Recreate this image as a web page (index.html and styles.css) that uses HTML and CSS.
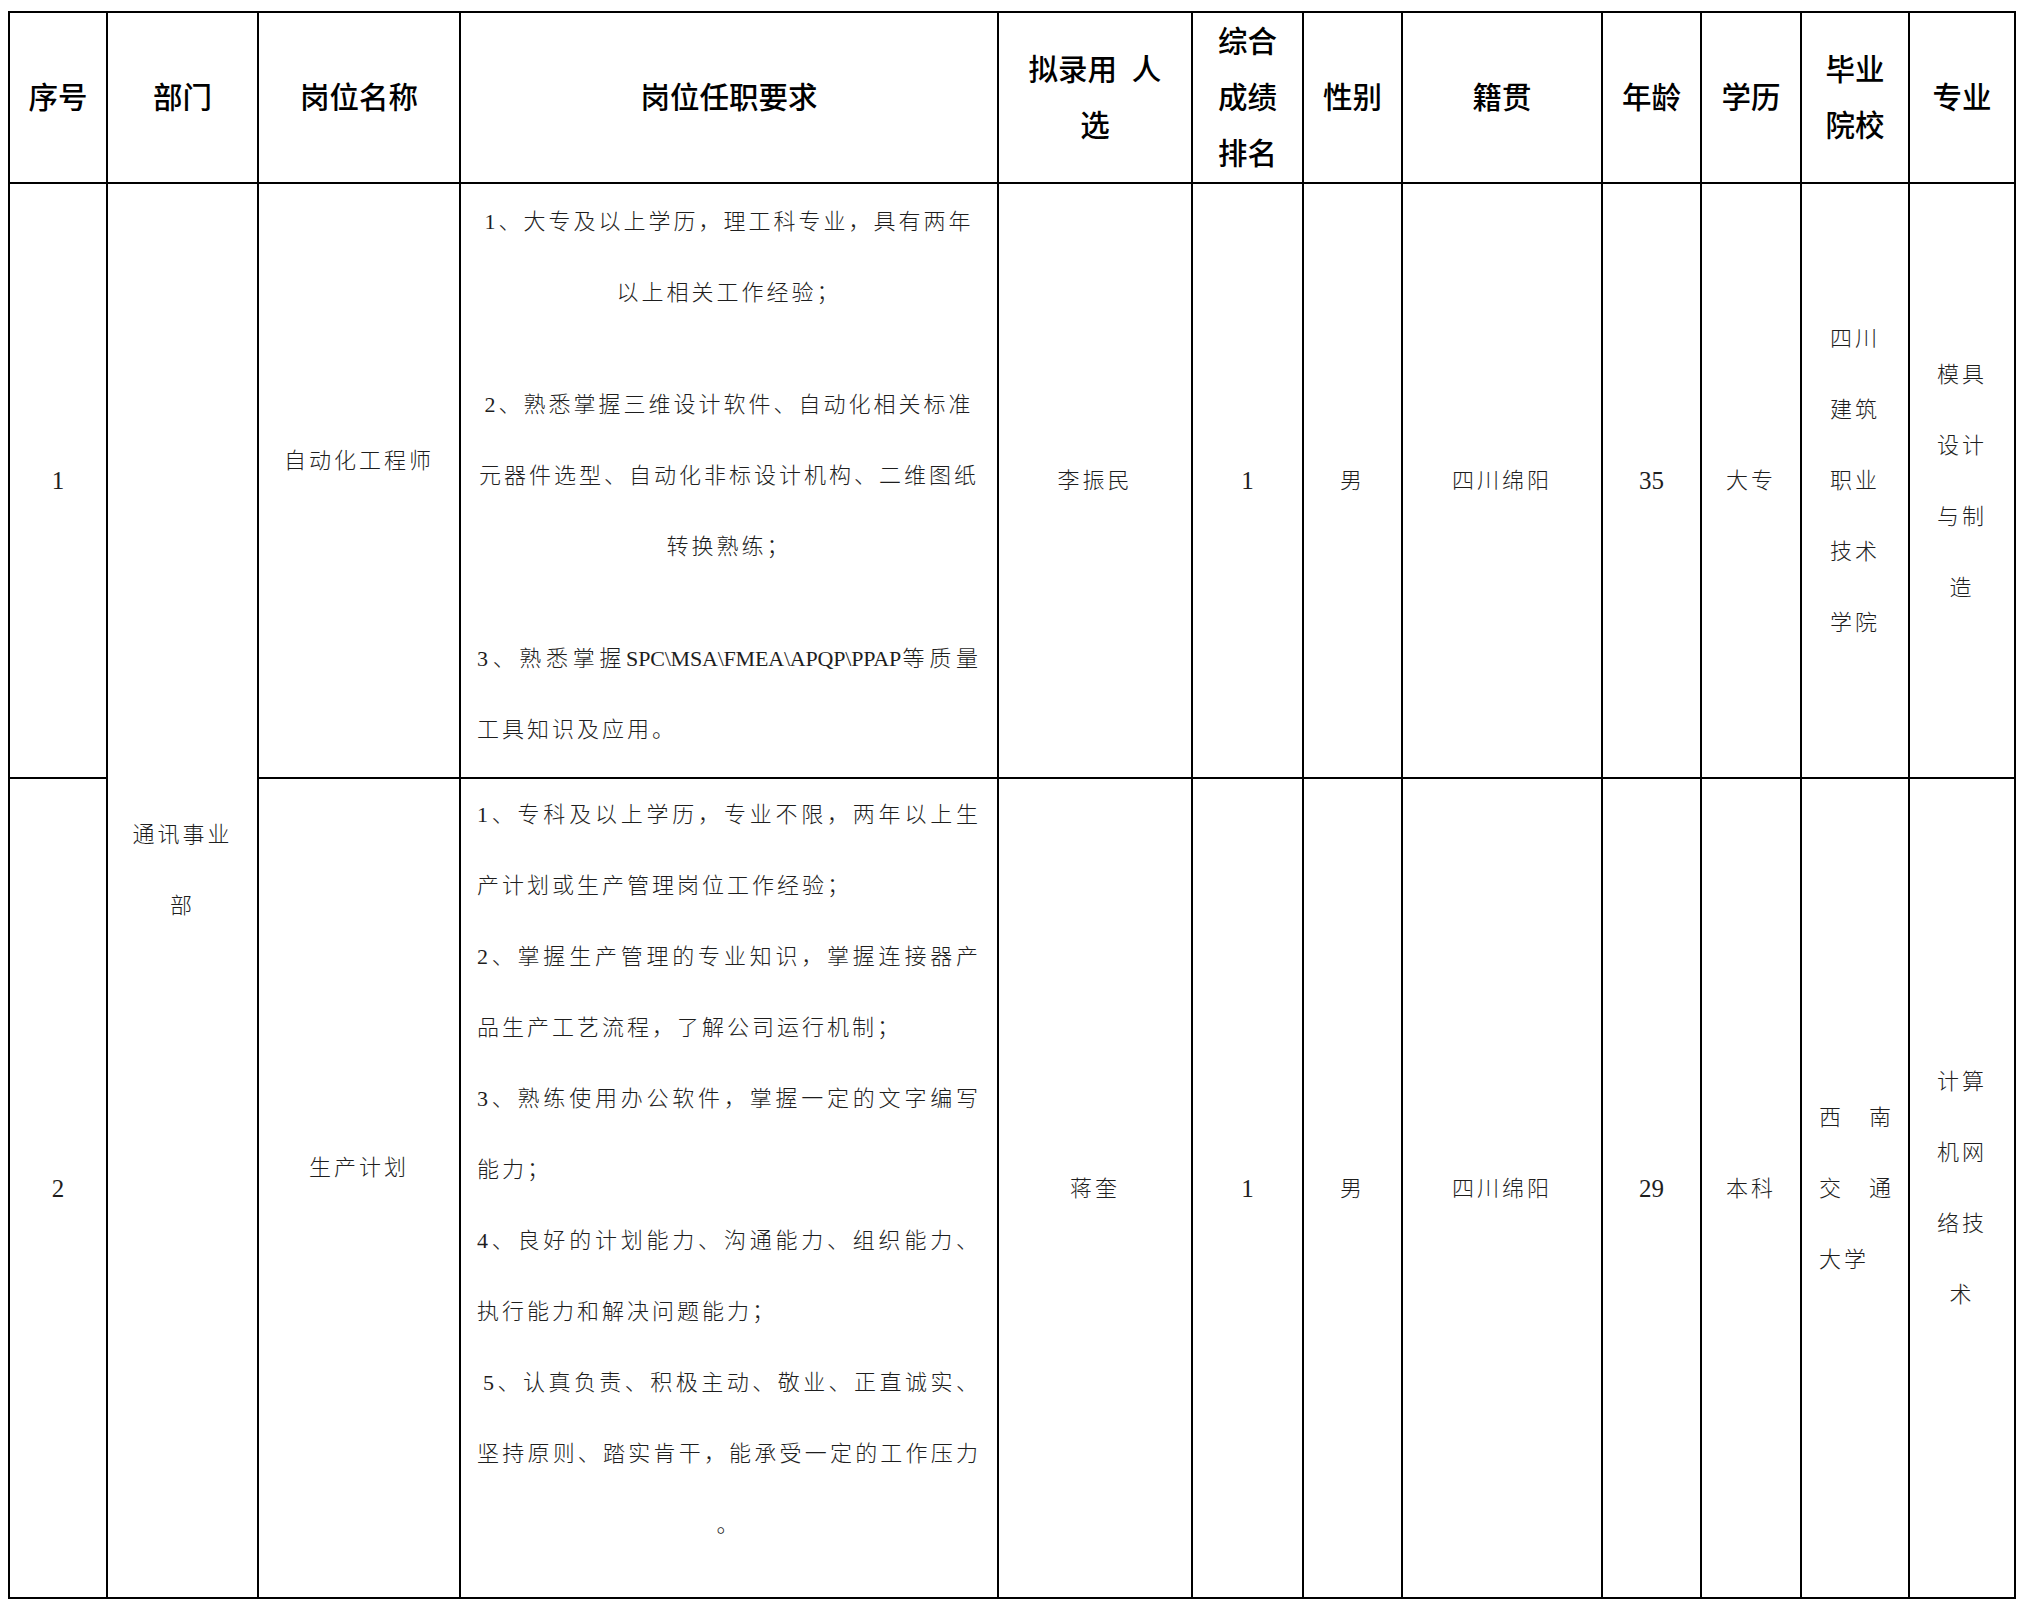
FILE: index.html
```html
<!DOCTYPE html>
<html lang="zh-CN">
<head>
<meta charset="utf-8">
<title>拟录用人员名单</title>
<link rel="stylesheet" href="styles.css">
</head>
<body>
<div class="sheet">
  <div class="cell head">序号</div>
  <div class="cell head">部门</div>
  <div class="cell head">岗位名称</div>
  <div class="cell head">岗位任职要求</div>
  <div class="cell head">拟录用&ensp;人<br>选</div>
  <div class="cell head">综合<br>成绩<br>排名</div>
  <div class="cell head">性别</div>
  <div class="cell head">籍贯</div>
  <div class="cell head">年龄</div>
  <div class="cell head">学历</div>
  <div class="cell head">毕业<br>院校</div>
  <div class="cell head">专业</div>

  <div class="cell num">1</div>
  <div class="cell dept lifted">通讯事业<br>部</div>
  <div class="cell lifted">自动化工程师</div>
  <div class="cell req req-first">
    <p class="para center">
      <span class="ln">1、大专及以上学历，理工科专业，具有两年</span>
      <span class="ln">以上相关工作经验；</span>
    </p>
    <p class="para center">
      <span class="ln">2、熟悉掌握三维设计软件、自动化相关标准</span>
      <span class="ln">元器件选型、自动化非标设计机构、二维图纸</span>
      <span class="ln">转换熟练；</span>
    </p>
    <p class="para">
      <span class="ln full">3、熟悉掌握<span class="lat">SPC\MSA\FMEA\APQP\PPAP</span>等质量</span>
      <span class="ln">工具知识及应用。</span>
    </p>
  </div>
  <div class="cell">李振民</div>
  <div class="cell num">1</div>
  <div class="cell">男</div>
  <div class="cell">四川绵阳</div>
  <div class="cell num">35</div>
  <div class="cell">大专</div>
  <div class="cell">四川<br>建筑<br>职业<br>技术<br>学院</div>
  <div class="cell">模具<br>设计<br>与制<br>造</div>

  <div class="cell num">2</div>
  <div class="cell lifted">生产计划</div>
  <div class="cell req">
    <p class="para">
      <span class="ln full">1、专科及以上学历，专业不限，两年以上生</span>
      <span class="ln">产计划或生产管理岗位工作经验；</span>
      <span class="ln full">2、掌握生产管理的专业知识，掌握连接器产</span>
      <span class="ln">品生产工艺流程，了解公司运行机制；</span>
      <span class="ln full">3、熟练使用办公软件，掌握一定的文字编写</span>
      <span class="ln">能力；</span>
      <span class="ln full">4、良好的计划能力、沟通能力、组织能力、</span>
      <span class="ln">执行能力和解决问题能力；</span>
      <span class="ln full indent">5、认真负责、积极主动、敬业、正直诚实、</span>
      <span class="ln full">坚持原则、踏实肯干，能承受一定的工作压力</span>
      <span class="ln center">。</span>
    </p>
  </div>
  <div class="cell">蒋奎</div>
  <div class="cell num">1</div>
  <div class="cell">男</div>
  <div class="cell">四川绵阳</div>
  <div class="cell num">29</div>
  <div class="cell">本科</div>
  <div class="cell spread">
    <span class="ln full">西南</span>
    <span class="ln full">交通</span>
    <span class="ln">大学</span>
  </div>
  <div class="cell">计算<br>机网<br>络技<br>术</div>
</div>
</body>
</html>
```

FILE: styles.css
```css
html, body {
  background: #ffffff;
}

body {
  margin: 11px 0 0 8px;
  font-family: "Liberation Serif", "Noto Sans CJK SC", serif;
  color: #1e1e1e;
}

.sheet {
  display: grid;
  grid-template-columns: 96px 149px 200px 536px 192px 109px 97px 198px 97px 98px 106px 104px;
  grid-template-rows: 169px 593px 818px;
  gap: 2px;
  padding: 2px;
  background: #000000;
  width: max-content;
}

.cell {
  background: #ffffff;
  display: flex;
  flex-direction: column;
  justify-content: center;
  align-items: center;
  text-align: center;
  padding: 0 16px;
  font-size: 22px;
  font-weight: 300;
  letter-spacing: 3px;
  line-height: 71px;
  overflow: hidden;
}

.head {
  font-family: "Liberation Serif", "Noto Sans CJK SC", serif;
  font-size: 29.5px;
  font-weight: 500;
  letter-spacing: 0;
  line-height: 56px;
  color: #000000;
  padding: 0 6px;
}

.num {
  font-size: 25px;
  letter-spacing: 0;
}

.dept {
  grid-row: span 2;
}

.lifted {
  padding-bottom: 41px;
}

.req {
  display: block;
  text-align: left;
  padding: 0 16px;
}

.req-first {
  padding-top: 2px;
}

.para {
  margin: 0;
}

.para + .para {
  margin-top: 41px;
}

.center {
  text-align: center;
}

.ln {
  display: block;
  white-space: nowrap;
}

.ln.full {
  text-align: justify;
  text-align-last: justify;
}

.ln.indent {
  padding-left: 6px;
}

.lat {
  font-family: "Liberation Serif", serif;
  font-size: 22px;
  letter-spacing: -0.2px;
}

.spread {
  align-items: stretch;
  text-align: left;
  padding: 0 14px 0 17px;
}
```
